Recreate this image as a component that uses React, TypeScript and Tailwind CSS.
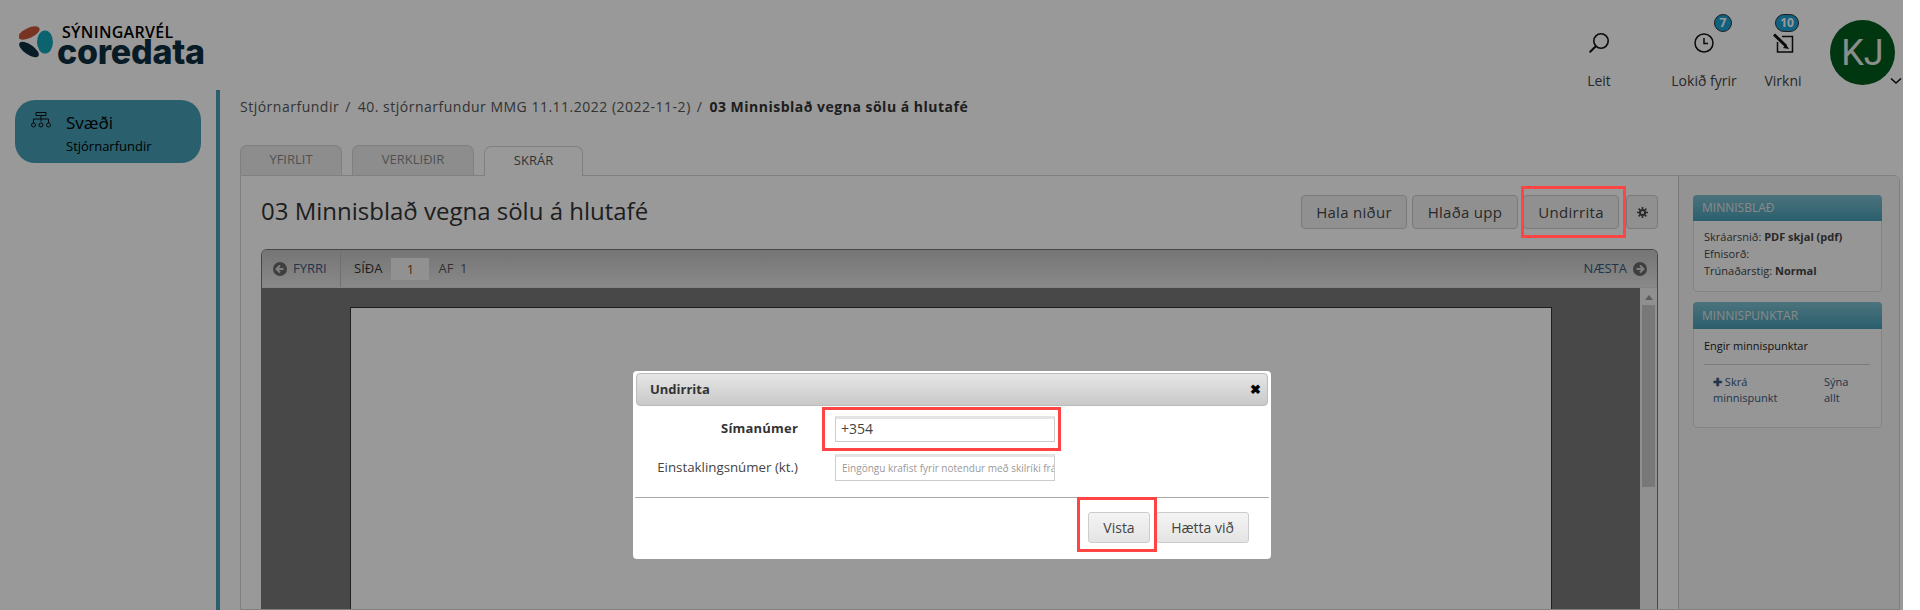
import React from 'react';

const OpenSans = "font-['Open_Sans','Liberation_Sans',sans-serif]";

const Logo: React.FC = () => (
  <div className="relative w-[190px] h-[44px] mt-[24px] ml-[19px]">
    <svg width="36" height="36" viewBox="0 0 36 36" className="absolute left-0 top-[1px]">
      <ellipse cx="10" cy="8" rx="11.5" ry="5" transform="rotate(-25 10 8)" fill="#c9553a" />
      <ellipse cx="26" cy="17" rx="8" ry="11.5" fill="#12a5b8" />
      <ellipse cx="10" cy="24.5" rx="11.5" ry="5" transform="rotate(35 10 24.5)" fill="#0d3040" />
    </svg>
    <div className="absolute left-[43px] top-[0px] text-[16px] leading-[16px] font-semibold text-black tracking-[0.3px]">
      SÝNINGARVÉL
    </div>
    <div className="absolute left-[38px] top-[17px] font-['Inter',sans-serif] text-[34px] leading-[22px] font-extrabold text-[#0d3040] tracking-[-0.25px]">
      coredata
    </div>
  </div>
);

const TopItem: React.FC<{ label: string; badge?: string; wide?: boolean; className: string; children: React.ReactNode }> = ({
  label,
  badge,
  wide,
  className,
  children,
}) => (
  <div className={`relative flex flex-col items-center ${className}`}>
    <div className="h-[24px] mt-[31px] flex items-center justify-center">{children}</div>
    <div className="mt-[16px] text-[14px] leading-[20px] text-[#444] whitespace-nowrap">{label}</div>
    {badge && (
      <div
        className={`absolute top-[14px] h-[18px] rounded-full bg-[#1ba2d6] border border-[#333] text-white text-[12px] leading-[16px] font-bold text-center ${
          wide ? 'w-[24px] left-[calc(50%-8px)]' : 'w-[18px] left-[calc(50%+10px)]'
        }`}
      >
        {badge}
      </div>
    )}
  </div>
);

const Tab: React.FC<{ w: string; active?: boolean; children: React.ReactNode }> = ({ w, active, children }) => (
  <div
    className={`${w} h-[30px] rounded-t-[7px] border border-b-0 border-[#d6d6d6] text-center text-[13px] leading-[27px] ${
      active ? 'bg-white text-[#555] relative top-[1px] h-[30px]' : 'bg-[#ececec] text-[#888]'
    }`}
  >
    {children}
  </div>
);

const ToolButton: React.FC<{ w: string; children: React.ReactNode }> = ({ w, children }) => (
  <div
    className={`${w} h-[34px] rounded-[4px] border border-[#ccc] bg-[#f1f1f1] flex items-center justify-center text-[15px] tracking-[0.3px] text-[#444]`}
  >
    {children}
  </div>
);

const ArrowCircle: React.FC<{ dir: 'l' | 'r' }> = ({ dir }) => (
  <svg width="14" height="14" viewBox="0 0 14 14" className="shrink-0">
    <circle cx="7" cy="7" r="7" fill="#6a6a6a" />
    <path d={dir === 'l' ? 'M7 3.5 3.5 7 7 10.5M4 7h6.5' : 'M7 3.5 10.5 7 7 10.5M10 7H3.5'} fill="none" stroke="#d4d4d4" strokeWidth="2" />
  </svg>
);

const SidePanel: React.FC<{ title: string; headH: string; bodyH: string; children: React.ReactNode }> = ({ title, headH, bodyH, children }) => (
  <div className="rounded-[4px] border border-[#dcdcdc] bg-[#fafafa]">
    <div className={`${headH} -mx-px -mt-px rounded-t-[4px] bg-gradient-to-b from-[#7dc0cf] to-[#469fb7] px-[9px] flex items-center text-[12px] text-[#e4e4e4]`}>
      {title}
    </div>
    <div className={`${bodyH} px-[10px] text-[11px] leading-[17px] text-[#444]`}>{children}</div>
  </div>
);

const App: React.FC = () => {
  return (
    <div className={`relative h-[610px] w-full overflow-hidden bg-white ${OpenSans}`}>
      <div className="h-[610px] w-[1903px] flex flex-col">
        <header className="h-[90px] shrink-0 flex justify-between">
          <Logo />
          <div className="flex items-start">
            <TopItem label="Leit" className="w-[60px] mr-[40px]">
              <svg width="24" height="24" viewBox="0 0 24 24" fill="none" stroke="#111" strokeWidth="1.6" strokeLinecap="round">
                <circle cx="14" cy="10" r="7.2" />
                <path d="M8.8 15.2 3.2 20.8" strokeWidth="2" />
              </svg>
            </TopItem>
            <TopItem label="Lokið fyrir" badge="7" className="w-[70px] mr-[19px]">
              <svg width="22" height="22" viewBox="0 0 22 22" fill="none" stroke="#111" strokeWidth="1.5">
                <circle cx="11" cy="11" r="9" />
                <path d="M11 6v5.5h4" />
              </svg>
            </TopItem>
            <TopItem label="Virkni" badge="10" wide className="w-[50px] mr-[22px]">
              <svg width="24" height="24" viewBox="0 0 24 24" fill="none" stroke="#111" strokeWidth="1.5">
                <path d="M11 5.5h10.5V21H6.5V11" />
                <path d="M3 3.5 15 15" strokeWidth="3" />
                <path d="M15 15l1.5 2-3-.5z" fill="#111" />
              </svg>
            </TopItem>
            <div className="relative mt-[20px] mr-[8px] w-[65px] h-[65px] rounded-full bg-[#005a1c] flex items-center justify-center font-['Roboto',sans-serif] text-[36px] text-white/90">
              KJ
              <svg width="12" height="8" viewBox="0 0 12 8" fill="none" stroke="#111" strokeWidth="1.6" className="absolute left-[60px] top-[57px]">
                <path d="M1 1.5 6 6l5-4.5" />
              </svg>
            </div>
          </div>
        </header>

        <div className="flex-1 flex min-h-0">
          <aside className="w-[216px] shrink-0 pt-[10px] pl-[15px]">
            <div className="w-[186px] h-[63px] rounded-[20px] bg-[#469fb7] flex text-black">
              <svg width="20" height="16" viewBox="0 0 20 16" fill="none" stroke="#111" strokeWidth="1" className="mt-[12px] ml-[16px] shrink-0">
                <path d="M5 .5h10v3H5zM10 3.5v6M2.5 11V7h15v4" />
                <circle cx="2.5" cy="13" r="2" />
                <circle cx="10" cy="13" r="2" />
                <circle cx="17.5" cy="13" r="2" />
              </svg>
              <div className="ml-[15px]">
                <div className="mt-[12px] text-[17px] leading-[22px]">Svæði</div>
                <div className="mt-[3px] text-[13px] leading-[18px]">Stjórnarfundir</div>
              </div>
            </div>
          </aside>

          <main className="flex-1 min-w-0 border-l-4 border-[#469fb7] pl-[20px] pr-[3px] flex flex-col">
            <div className="h-[55px] shrink-0 pt-[7px] text-[14px] leading-[20px] text-[#555] tracking-[0.5px] whitespace-nowrap">
              Stjórnarfundir
              <span className="ml-[6px] mr-[7px]">/</span>
              40. stjórnarfundur MMG 11.11.2022 (2022-11-2)
              <span className="ml-[6px] mr-[7px]">/</span>
              <span className="font-bold text-[#333]">03 Minnisblað vegna sölu á hlutafé</span>
            </div>

            <div className="h-[30px] shrink-0 flex gap-[10px]">
              <Tab w="w-[102px]">YFIRLIT</Tab>
              <Tab w="w-[122px]">VERKLIÐIR</Tab>
              <Tab w="w-[99px]" active>SKRÁR</Tab>
            </div>

            <div className="flex-1 min-h-0 flex border border-[#d6d6d6] rounded-tr-[6px] overflow-hidden">
              <div className="w-[1437px] shrink-0 pl-[20px] pr-[20px] flex flex-col">
                <div className="h-[54px] mt-[19px] shrink-0 flex justify-between items-start">
                  <h1 className="text-[24px] leading-[32px] text-[#333]">03 Minnisblað vegna sölu á hlutafé</h1>
                  <div className="flex gap-[5px]">
                    <ToolButton w="w-[106px]">Hala niður</ToolButton>
                    <ToolButton w="w-[106px]">Hlaða upp</ToolButton>
                    <ToolButton w="w-[96px]">Undirrita</ToolButton>
                    <div className="w-[32px] h-[34px] ml-[2px] rounded-[4px] border border-[#ccc] bg-[#f1f1f1] flex items-center justify-center">
                      <svg width="11" height="11" viewBox="0 0 11 11">
                        <circle cx="5.5" cy="5.5" r="2.6" fill="none" stroke="#444" strokeWidth="2" />
                        <path d="M5.5 0v2M5.5 9v2M0 5.5h2M9 5.5h2M1.6 1.6 3 3M8 8l1.4 1.4M9.4 1.6 8 3M3 8 1.6 9.4" stroke="#444" strokeWidth="1.6" />
                      </svg>
                    </div>
                  </div>
                </div>

                <div className="flex-1 min-h-0 flex flex-col rounded-t-[6px] overflow-hidden border-x border-t border-[#777]">
                  <div className="h-[38px] shrink-0 flex items-center bg-gradient-to-b from-[#c4c4c4] to-[#e4e4e4] border-b border-[#ddd] text-[13px] text-[#333]">
                    <div className="w-[79px] h-full border-r border-[#bbb] flex items-center pl-[11px] gap-[6px] text-[#36597f]">
                      <ArrowCircle dir="l" />
                      FYRRI
                    </div>
                    <span className="ml-[13px]">SÍÐA</span>
                    <div className="ml-[9px] w-[38px] h-[22px] bg-[#f2f2f2] text-center leading-[22px] text-[#7a4a10]">1</div>
                    <span className="ml-[9px] text-[#555] whitespace-pre">AF  1</span>
                    <div className="ml-auto mr-[10px] flex items-center gap-[6px] text-[#36597f]">
                      NÆSTA
                      <ArrowCircle dir="r" />
                    </div>
                  </div>
                  <div className="flex-1 min-h-0 flex bg-[#787878]">
                    <div className="flex-1 min-w-0 pt-[19px] pl-[88px] pr-[88px]">
                      <div className="h-full bg-white border border-b-0 border-[#333]" />
                    </div>
                    <div className="w-[17px] shrink-0 bg-[#f0f0f0] flex flex-col items-center pt-[7px]">
                      <div className="w-0 h-0 border-x-[4px] border-x-transparent border-b-[5px] border-b-[#999]" />
                      <div className="w-[13px] h-[182px] mt-[5px] bg-[#c8c8c8]" />
                    </div>
                  </div>
                </div>
              </div>

              <div className="flex-1 min-w-0 border-l border-[#ccc] bg-[#f6f6f6] pl-[14px] pr-[17px] pt-[19px] flex flex-col gap-[10px]">
                <SidePanel title="MINNISBLAÐ" headH="h-[26px]" bodyH="h-[70px] pt-[7px]">
                  <div>
                    Skráarsnið: <b>PDF skjal (pdf)</b>
                  </div>
                  <div>Efnisorð:</div>
                  <div>
                    Trúnaðarstig: <b>Normal</b>
                  </div>
                </SidePanel>
                <SidePanel title="MINNISPUNKTAR" headH="h-[27px]" bodyH="h-[98px] pt-[8px]">
                  <div className="pb-[10px] border-b border-[#ccc] mr-[1px] text-[#222]">Engir minnispunktar</div>
                  <div className="mt-[9px] pl-[9px] flex leading-[16px] text-[#36597f]">
                    <div className="w-[111px]">
                      <span className="font-bold">✚</span> Skrá
                      <br />
                      minnispunkt
                    </div>
                    <div>
                      Sýna
                      <br />
                      allt
                    </div>
                  </div>
                </SidePanel>
              </div>
            </div>
          </main>
        </div>
      </div>

      {/* dimmed page */}
      <div className="absolute left-0 top-0 w-[1903px] h-[610px] bg-black/40" />

      {/* red marker on the toolbar button */}
      <div className="absolute left-[1521px] top-[186px] w-[105px] h-[52px] border-[3px] border-[#ff4444]" />

      {/* modal */}
      <div className="absolute left-[633px] top-[371px] w-[638px] h-[188px] rounded-[4px] bg-white p-[2px]">
        <div className="h-[33px] mx-[1px] rounded-[4px] border border-[#bbb] bg-gradient-to-b from-[#e6e6e6] to-[#c9c9c9] flex items-center justify-between pl-[13px] pr-[6px] text-[13px] font-bold text-[#333]">
          Undirrita
          <span className="text-[13px] text-black leading-none">✖</span>
        </div>
        <div className="mt-[10px] flex items-center h-[26px]">
          <label className="w-[163px] mr-[37px] text-right text-[13px] font-bold text-[#333] tracking-[0.2px]">Símanúmer</label>
          <div className="w-[220px] h-[26px] border border-[#ccc] border-t-[3px] border-t-[#e4e4e4] pl-[5px] text-[14px] leading-[20px] text-[#444]">+354</div>
        </div>
        <div className="mt-[12px] flex items-center h-[27px]">
          <label className="w-[163px] mr-[37px] text-right text-[13.3px] text-[#444] whitespace-nowrap">Einstaklingsnúmer (kt.)</label>
          <div className="w-[220px] h-[27px] border border-[#ccc] border-t-[3px] border-t-[#e4e4e4] pl-[6px] text-[10px] leading-[22px] text-[#999] overflow-hidden whitespace-nowrap">
            Eingöngu krafist fyrir notendur með skilríki frá
          </div>
        </div>
        <div className="mt-[16px] border-t border-[#aaa] h-[44px] flex justify-end items-start pt-[14px] pr-[20px] gap-[6px]">
          <div className="w-[62px] h-[31px] rounded-[3px] border border-[#ccc] bg-gradient-to-b from-[#f4f4f4] to-[#e4e4e4] text-center text-[14px] leading-[29px] text-[#444]">Vista</div>
          <div className="w-[93px] h-[31px] rounded-[3px] border border-[#ccc] bg-gradient-to-b from-[#f4f4f4] to-[#e4e4e4] text-center text-[14px] leading-[29px] text-[#444]">Hætta við</div>
        </div>
      </div>

      {/* red markers inside the modal */}
      <div className="absolute left-[822px] top-[407px] w-[239px] h-[44px] border-[3px] border-[#ff4444]" />
      <div className="absolute left-[1077px] top-[497px] w-[80px] h-[55px] border-[3px] border-[#ff4444]" />
    </div>
  );
};

export default App;
